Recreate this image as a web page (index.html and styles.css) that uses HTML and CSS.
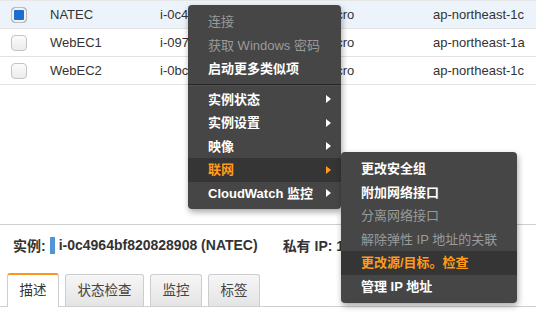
FILE: index.html
```html
<!DOCTYPE html>
<html lang="zh-CN">
<head>
    <meta charset="UTF-8">
    <title>EC2 实例</title>
    <link rel="stylesheet" href="styles.css">
</head>
<body>
<div class="list">
    <div class="row selected">
        <span class="cell check"><span class="box on"></span></span>
        <span class="cell name">NATEC</span>
        <span class="cell id">i-0c4964bf820828908</span>
        <span class="cell type">t2.micro</span>
        <span class="cell zone">ap-northeast-1c</span>
    </div>
    <div class="row">
        <span class="cell check"><span class="box"></span></span>
        <span class="cell name">WebEC1</span>
        <span class="cell id">i-0972a1b3c4d5e6f70</span>
        <span class="cell type">t2.micro</span>
        <span class="cell zone">ap-northeast-1a</span>
    </div>
    <div class="row">
        <span class="cell check"><span class="box"></span></span>
        <span class="cell name">WebEC2</span>
        <span class="cell id">i-0bc1d2e3f4a5b6c78</span>
        <span class="cell type">t2.micro</span>
        <span class="cell zone">ap-northeast-1c</span>
    </div>
</div>

<div class="detail">
    <div class="summary">
        <span class="label">实例:</span>
        <span class="bar"></span>
        <span class="value">i-0c4964bf820828908 (NATEC)</span>
        <span class="label private">私有 IP: 172.31.0.10</span>
    </div>
    <div class="tabs">
        <span class="tab active">描述</span>
        <span class="tab">状态检查</span>
        <span class="tab">监控</span>
        <span class="tab">标签</span>
    </div>
</div>

<ul class="menu main-menu">
    <li class="off">连接</li>
    <li class="off">获取 Windows 密码</li>
    <li>启动更多类似项</li>
    <li class="sep"></li>
    <li class="sub">实例状态</li>
    <li class="sub">实例设置</li>
    <li class="sub">映像</li>
    <li class="sub hover">联网</li>
    <li class="sub">CloudWatch 监控</li>
</ul>

<ul class="menu sub-menu">
    <li>更改安全组</li>
    <li>附加网络接口</li>
    <li class="off">分离网络接口</li>
    <li class="off">解除弹性 IP 地址的关联</li>
    <li class="hover">更改源/目标。检查</li>
    <li>管理 IP 地址</li>
</ul>
</body>
</html>
```

FILE: styles.css
```css
body {
    margin: 0;
    font-family: "Liberation Sans", "Noto Sans CJK SC", sans-serif;
    font-size: 13px;
    color: #333;
    background: #fff;
}

.list {
    height: 223px;
    border-bottom: 1px solid #cfcfcf;
    border-top: 1px solid #e6e6e6;
}

.row {
    display: flex;
    align-items: center;
    height: 27px;
    border-bottom: 1px solid #e2e2e2;
}

.row.selected {
    background: #edf3fb;
}

.cell {
    white-space: nowrap;
    overflow: hidden;
}

.check {
    width: 50px;
    padding-left: 11px;
    box-sizing: border-box;
    display: flex;
}

.box {
    width: 16px;
    height: 16px;
    box-sizing: border-box;
    border: 1px solid #c4c4c4;
    border-radius: 4px;
    background: linear-gradient(#fbfbfb, #ececec);
}

.box.on {
    background: #1b6dd4;
    box-shadow: inset 0 0 0 2px #f2f2f2;
    border-color: #bdbdbd;
}

.name {
    width: 110px;
}

.id {
    width: 148px;
}

.type {
    width: 125px;
}

.zone {
    width: 100px;
}

.summary {
    display: flex;
    align-items: center;
    height: 18px;
    padding: 11px 0 0 13px;
    font-size: 14px;
    font-weight: bold;
}

.bar {
    width: 5px;
    height: 17px;
    background: #4f95d8;
    margin: 0 4px 0 4px;
}

.private {
    margin-left: 25px;
    white-space: nowrap;
}

.tabs {
    display: flex;
    align-items: flex-end;
    gap: 6px;
    margin-top: 19px;
    padding-left: 7px;
    border-bottom: 1px solid #cfcfcf;
}

.tab {
    height: 31px;
    line-height: 31px;
    padding: 0 11.5px;
    font-size: 13.5px;
    color: #444;
    border: 1px solid #cdcdcd;
    border-bottom: none;
    border-radius: 3px 3px 0 0;
    background: linear-gradient(#f6f6f6, #e4e4e4);
}

.tab.active {
    height: 32px;
    line-height: 32px;
    background: #fff;
    border-top: 2px solid #f7981d;
    color: #333;
    margin-bottom: -1px;
}

.menu {
    position: absolute;
    margin: 0;
    list-style: none;
    background: #464646;
    border-radius: 4px;
    box-shadow: 1px 3px 6px rgba(0, 0, 0, 0.35);
    color: #fff;
    font-weight: bold;
}

.main-menu {
    left: 188px;
    top: 5px;
    width: 153px;
    padding: 5px 0 4px;
}

.sub-menu {
    left: 341px;
    top: 152px;
    width: 176px;
    padding: 5px 0 4px;
}

.menu li {
    height: 23.5px;
    line-height: 23.5px;
    padding-left: 20px;
    white-space: nowrap;
    position: relative;
}

.sub-menu li {
    height: 23.6px;
    line-height: 23.6px;
}

.menu li.off {
    color: #9a9a9a;
    font-weight: normal;
}

.menu li.hover {
    background: #353535;
    color: #ff9b1a;
}

.menu li.sep {
    height: 0;
    margin: 3px 0 2px;
    border-top: 1px solid #262626;
    border-bottom: 1px solid #505050;
}

.menu li.sub::after {
    content: "";
    position: absolute;
    right: 10px;
    top: 7.5px;
    border-left: 5px solid #fff;
    border-top: 4.5px solid transparent;
    border-bottom: 4.5px solid transparent;
}

.menu li.sub.hover::after {
    border-left-color: #ff9b1a;
}
```
